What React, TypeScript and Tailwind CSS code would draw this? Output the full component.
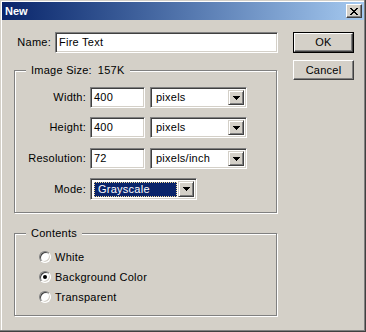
import React from "react";

const sunken =
  "border border-t-[#808080] border-l-[#808080] border-b-white border-r-white shadow-[inset_1px_1px_0_#404040,inset_-1px_-1px_0_#d4d0c8]";

function Arrow() {
  return (
    <svg width="7" height="4" viewBox="0 0 7 4" shapeRendering="crispEdges">
      <rect x="0" y="0" width="7" height="1" fill="#000" />
      <rect x="1" y="1" width="5" height="1" fill="#000" />
      <rect x="2" y="2" width="3" height="1" fill="#000" />
      <rect x="3" y="3" width="1" height="1" fill="#000" />
    </svg>
  );
}

function DropButton() {
  return (
    <div className="w-[16px] h-full flex items-center justify-center bg-[#d4d0c8] border border-t-[#d4d0c8] border-l-[#d4d0c8] border-b-[#404040] border-r-[#404040] shadow-[inset_1px_1px_0_#fff,inset_-1px_-1px_0_#808080]">
      <Arrow />
    </div>
  );
}

function Select({ value, width, focused }: { value: string; width: string; focused?: boolean }) {
  return (
    <div className={`${width} h-full bg-white ${sunken} flex p-[2px]`}>
      <div className="flex-1 flex items-center pl-[1px] pr-[1px]">
        {focused ? (
          <div className="w-full h-[15px] bg-[#0a246a] text-white flex items-center pl-[3px] border border-dotted border-[#f5db95]">
            {value}
          </div>
        ) : (
          <span className="pl-[2px]">{value}</span>
        )}
      </div>
      <DropButton />
    </div>
  );
}

function Field({ value, width }: { value: string; width: string }) {
  return (
    <div className={`${width} h-full bg-white ${sunken} flex items-center pl-[3px]`}>
      {value}
    </div>
  );
}

function Radio({ checked }: { checked?: boolean }) {
  return (
    <div className="w-[12px] h-[12px] rounded-full bg-white border border-t-[#808080] border-l-[#808080] border-b-white border-r-white shadow-[inset_1px_1px_0_#404040,inset_-1px_-1px_0_#d4d0c8] flex items-center justify-center">
      {checked && <div className="w-[4px] h-[4px] rounded-full bg-black" />}
    </div>
  );
}

function Group({
  legend,
  className,
  children,
}: {
  legend: React.ReactNode;
  className: string;
  children: React.ReactNode;
}) {
  return (
    <div
      className={`relative w-[263px] border border-[#808080] shadow-[1px_1px_0_#fff,inset_1px_1px_0_#fff] ${className}`}
    >
      <div className="absolute left-[11px] top-[-8px] h-[14px] px-[5px] bg-[#d4d0c8] flex items-center">
        {legend}
      </div>
      {children}
    </div>
  );
}

function Row({ label, children, className }: { label: string; children: React.ReactNode; className?: string }) {
  return (
    <div className={`flex items-stretch ${className ?? "h-[21px]"}`}>
      <div className="w-[71px] flex items-center justify-end">{label}</div>
      <div className="ml-[4px] flex gap-[5px]">{children}</div>
    </div>
  );
}

export default function App() {
  return (
    <div className="w-[366px] h-[332px] bg-[#d4d0c8] pt-[2px] pl-[2px] shadow-[inset_-1px_-1px_0_#404040,inset_-2px_-2px_0_#808080,inset_1px_1px_0_#d4d0c8,inset_2px_2px_0_#fff] font-['Liberation_Sans',sans-serif] text-[11px] tracking-[0.25px] text-black leading-none">
      {/* caption */}
      <div className="w-[362px] h-[18px] bg-gradient-to-r from-[#0a246a] to-[#a6caf0] flex items-center justify-between pl-[3px] pr-[2px]">
        <span className="text-white font-bold text-[11px] tracking-normal">New</span>
        <div className="w-[16px] h-[14px] bg-[#d4d0c8] border border-t-white border-l-white border-b-[#404040] border-r-[#404040] shadow-[inset_-1px_-1px_0_#808080] flex items-center justify-center">
          <svg width="8" height="7" viewBox="0 0 8 7" shapeRendering="crispEdges">
            <rect x="0" y="0" width="2" height="1" fill="#000" />
            <rect x="6" y="0" width="2" height="1" fill="#000" />
            <rect x="1" y="1" width="2" height="1" fill="#000" />
            <rect x="5" y="1" width="2" height="1" fill="#000" />
            <rect x="2" y="2" width="4" height="1" fill="#000" />
            <rect x="3" y="3" width="2" height="1" fill="#000" />
            <rect x="2" y="4" width="4" height="1" fill="#000" />
            <rect x="1" y="5" width="2" height="1" fill="#000" />
            <rect x="5" y="5" width="2" height="1" fill="#000" />
            <rect x="0" y="6" width="2" height="1" fill="#000" />
            <rect x="6" y="6" width="2" height="1" fill="#000" />
          </svg>
        </div>
      </div>

      {/* body */}
      <div className="flex pl-[12px] pt-[12px]">
        <div className="w-[264px] flex flex-col">
          <div className="flex h-[21px] items-stretch">
            <div className="w-[37px] flex items-center justify-end">Name:</div>
            <div className="ml-[4px]">
              <Field value="Fire Text" width="w-[223px]" />
            </div>
          </div>

          <Group legend={<><span>Image Size:</span><span className="ml-[6px]">157K</span></>} className="mt-[17px] h-[143px] pt-[16px]">
            <div className="flex flex-col">
              <Row label="Width:">
                <Field value="400" width="w-[55px]" />
                <Select value="pixels" width="w-[97px]" />
              </Row>
              <Row label="Height:" className="h-[21px] mt-[9px]">
                <Field value="400" width="w-[55px]" />
                <Select value="pixels" width="w-[97px]" />
              </Row>
              <Row label="Resolution:" className="h-[21px] mt-[10px]">
                <Field value="72" width="w-[55px]" />
                <Select value="pixels/inch" width="w-[97px]" />
              </Row>
              <Row label="Mode:" className="h-[22px] mt-[9px]">
                <Select value="Grayscale" width="w-[107px]" focused />
              </Row>
            </div>
          </Group>

          <Group legend="Contents" className="mt-[20px] h-[83px] pt-[13px] pl-[24px]">
            <div className="flex flex-col">
              <div className="h-[20px] flex items-center gap-[4px]">
                <Radio />
                <span>White</span>
              </div>
              <div className="h-[20px] flex items-center gap-[4px]">
                <Radio checked />
                <span>Background Color</span>
              </div>
              <div className="h-[20px] flex items-center gap-[4px]">
                <Radio />
                <span>Transparent</span>
              </div>
            </div>
          </Group>
        </div>

        <div className="ml-[15px] flex flex-col">
          <div className="w-[61px] h-[21px] border border-black">
            <div className="w-full h-full bg-[#d4d0c8] border border-t-white border-l-white border-b-[#404040] border-r-[#404040] shadow-[inset_-1px_-1px_0_#808080] flex items-center justify-center">
              OK
            </div>
          </div>
          <div className="mt-[7px] w-[61px] h-[20px] bg-[#d4d0c8] border border-t-white border-l-white border-b-[#404040] border-r-[#404040] shadow-[inset_-1px_-1px_0_#808080] flex items-center justify-center">
            Cancel
          </div>
        </div>
      </div>
    </div>
  );
}
